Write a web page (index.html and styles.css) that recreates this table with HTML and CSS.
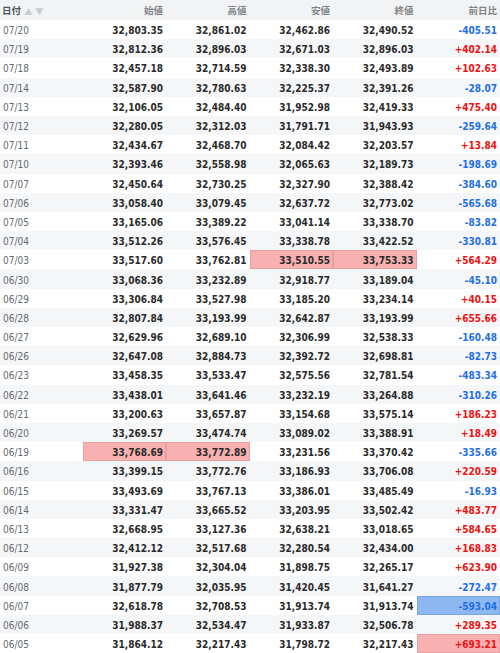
FILE: index.html
```html
<!DOCTYPE html>
<html lang="ja">
<head>
<meta charset="utf-8">
<link rel="stylesheet" href="styles.css">
</head>
<body>
<table class="quotes">
<colgroup>
<col class="c-date"><col class="c-num"><col class="c-num"><col class="c-num"><col class="c-num"><col class="c-num">
</colgroup>
<thead>
<tr>
<th class="h-date">日付<span class="sort">▲</span><span class="sort">▼</span></th>
<th>始値</th><th>高値</th><th>安値</th><th>終値</th><th>前日比</th>
</tr>
</thead>
<tbody>
<tr><td>07/20</td><td>32,803.35</td><td>32,861.02</td><td>32,462.86</td><td>32,490.52</td><td class="neg">-405.51</td></tr>
<tr><td>07/19</td><td>32,812.36</td><td>32,896.03</td><td>32,671.03</td><td>32,896.03</td><td class="pos">+402.14</td></tr>
<tr><td>07/18</td><td>32,457.18</td><td>32,714.59</td><td>32,338.30</td><td>32,493.89</td><td class="pos">+102.63</td></tr>
<tr><td>07/14</td><td>32,587.90</td><td>32,780.63</td><td>32,225.37</td><td>32,391.26</td><td class="neg">-28.07</td></tr>
<tr><td>07/13</td><td>32,106.05</td><td>32,484.40</td><td>31,952.98</td><td>32,419.33</td><td class="pos">+475.40</td></tr>
<tr><td>07/12</td><td>32,280.05</td><td>32,312.03</td><td>31,791.71</td><td>31,943.93</td><td class="neg">-259.64</td></tr>
<tr><td>07/11</td><td>32,434.67</td><td>32,468.70</td><td>32,084.42</td><td>32,203.57</td><td class="pos">+13.84</td></tr>
<tr><td>07/10</td><td>32,393.46</td><td>32,558.98</td><td>32,065.63</td><td>32,189.73</td><td class="neg">-198.69</td></tr>
<tr><td>07/07</td><td>32,450.64</td><td>32,730.25</td><td>32,327.90</td><td>32,388.42</td><td class="neg">-384.60</td></tr>
<tr><td>07/06</td><td>33,058.40</td><td>33,079.45</td><td>32,637.72</td><td>32,773.02</td><td class="neg">-565.68</td></tr>
<tr><td>07/05</td><td>33,165.06</td><td>33,389.22</td><td>33,041.14</td><td>33,338.70</td><td class="neg">-83.82</td></tr>
<tr><td>07/04</td><td>33,512.26</td><td>33,576.45</td><td>33,338.78</td><td>33,422.52</td><td class="neg">-330.81</td></tr>
<tr><td>07/03</td><td>33,517.60</td><td>33,762.81</td><td class="hl-red">33,510.55</td><td class="hl-red">33,753.33</td><td class="pos">+564.29</td></tr>
<tr><td>06/30</td><td>33,068.36</td><td>33,232.89</td><td>32,918.77</td><td>33,189.04</td><td class="neg">-45.10</td></tr>
<tr><td>06/29</td><td>33,306.84</td><td>33,527.98</td><td>33,185.20</td><td>33,234.14</td><td class="pos">+40.15</td></tr>
<tr><td>06/28</td><td>32,807.84</td><td>33,193.99</td><td>32,642.87</td><td>33,193.99</td><td class="pos">+655.66</td></tr>
<tr><td>06/27</td><td>32,629.96</td><td>32,689.10</td><td>32,306.99</td><td>32,538.33</td><td class="neg">-160.48</td></tr>
<tr><td>06/26</td><td>32,647.08</td><td>32,884.73</td><td>32,392.72</td><td>32,698.81</td><td class="neg">-82.73</td></tr>
<tr><td>06/23</td><td>33,458.35</td><td>33,533.47</td><td>32,575.56</td><td>32,781.54</td><td class="neg">-483.34</td></tr>
<tr><td>06/22</td><td>33,438.01</td><td>33,641.46</td><td>33,232.19</td><td>33,264.88</td><td class="neg">-310.26</td></tr>
<tr><td>06/21</td><td>33,200.63</td><td>33,657.87</td><td>33,154.68</td><td>33,575.14</td><td class="pos">+186.23</td></tr>
<tr><td>06/20</td><td>33,269.57</td><td>33,474.74</td><td>33,089.02</td><td>33,388.91</td><td class="pos">+18.49</td></tr>
<tr><td>06/19</td><td class="hl-red">33,768.69</td><td class="hl-red">33,772.89</td><td>33,231.56</td><td>33,370.42</td><td class="neg">-335.66</td></tr>
<tr><td>06/16</td><td>33,399.15</td><td>33,772.76</td><td>33,186.93</td><td>33,706.08</td><td class="pos">+220.59</td></tr>
<tr><td>06/15</td><td>33,493.69</td><td>33,767.13</td><td>33,386.01</td><td>33,485.49</td><td class="neg">-16.93</td></tr>
<tr><td>06/14</td><td>33,331.47</td><td>33,665.52</td><td>33,203.95</td><td>33,502.42</td><td class="pos">+483.77</td></tr>
<tr><td>06/13</td><td>32,668.95</td><td>33,127.36</td><td>32,638.21</td><td>33,018.65</td><td class="pos">+584.65</td></tr>
<tr><td>06/12</td><td>32,412.12</td><td>32,517.68</td><td>32,280.54</td><td>32,434.00</td><td class="pos">+168.83</td></tr>
<tr><td>06/09</td><td>31,927.38</td><td>32,304.04</td><td>31,898.75</td><td>32,265.17</td><td class="pos">+623.90</td></tr>
<tr><td>06/08</td><td>31,877.79</td><td>32,035.95</td><td>31,420.45</td><td>31,641.27</td><td class="neg">-272.47</td></tr>
<tr><td>06/07</td><td>32,618.78</td><td>32,708.53</td><td>31,913.74</td><td>31,913.74</td><td class="neg hl-blue">-593.04</td></tr>
<tr><td>06/06</td><td>31,988.37</td><td>32,534.47</td><td>31,933.87</td><td>32,506.78</td><td class="pos">+289.35</td></tr>
<tr><td>06/05</td><td>31,864.12</td><td>32,217.43</td><td>31,798.72</td><td>32,217.43</td><td class="pos hl-red">+693.21</td></tr>
</tbody>
</table>
</body>
</html>
```
FILE: styles.css
```css
html, body {
  margin: 0;
  padding: 0;
  background: #ffffff;
}

.quotes {
  width: 500px;
  border-collapse: collapse;
  table-layout: fixed;
  font-family: "DejaVu Sans Condensed", "DejaVu Sans", "Noto Sans CJK JP", sans-serif;
  font-size: 10px;
}

.c-date { width: 82.5px; }
.c-num { width: 83.5px; }

.quotes th {
  height: 20px;
  padding: 0 3px 0 0;
  background: #f1f3f5;
  color: #808488;
  font-weight: bold;
  font-size: 9.5px;
  text-align: right;
  vertical-align: middle;
  box-sizing: border-box;
}

.quotes th.h-date {
  text-align: left;
  padding-left: 2px;
  color: #4f555c;
}

.sort {
  display: inline-block;
  color: #c8ccd0;
  font-family: "DejaVu Sans", sans-serif;
  font-size: 9px;
  font-weight: normal;
  margin-left: 4px;
  transform: scaleX(1.2);
}

.sort + .sort {
  margin-left: 4px;
}

.quotes tbody tr {
  height: 19.2px;
}

.quotes tbody tr:nth-child(even) {
  background: #f4f6f8;
}

.quotes td {
  padding: 2px 3px 0 0;
  text-align: right;
  font-weight: bold;
  color: #2a2a2a;
  white-space: nowrap;
  vertical-align: middle;
  box-sizing: border-box;
}

.quotes td:first-child {
  text-align: left;
  padding-left: 3px;
  font-weight: normal;
  color: #666a70;
}

.quotes td.neg { color: #1f6fe8; }
.quotes td.pos { color: #f01010; }

.quotes td.hl-red {
  background: #f7b1b1;
  box-shadow: inset 0 0 0 1px #e8a0a0;
}

.quotes td.hl-blue {
  background: #8db7f0;
  box-shadow: inset 0 0 0 1px #76a4e4;
}
```
